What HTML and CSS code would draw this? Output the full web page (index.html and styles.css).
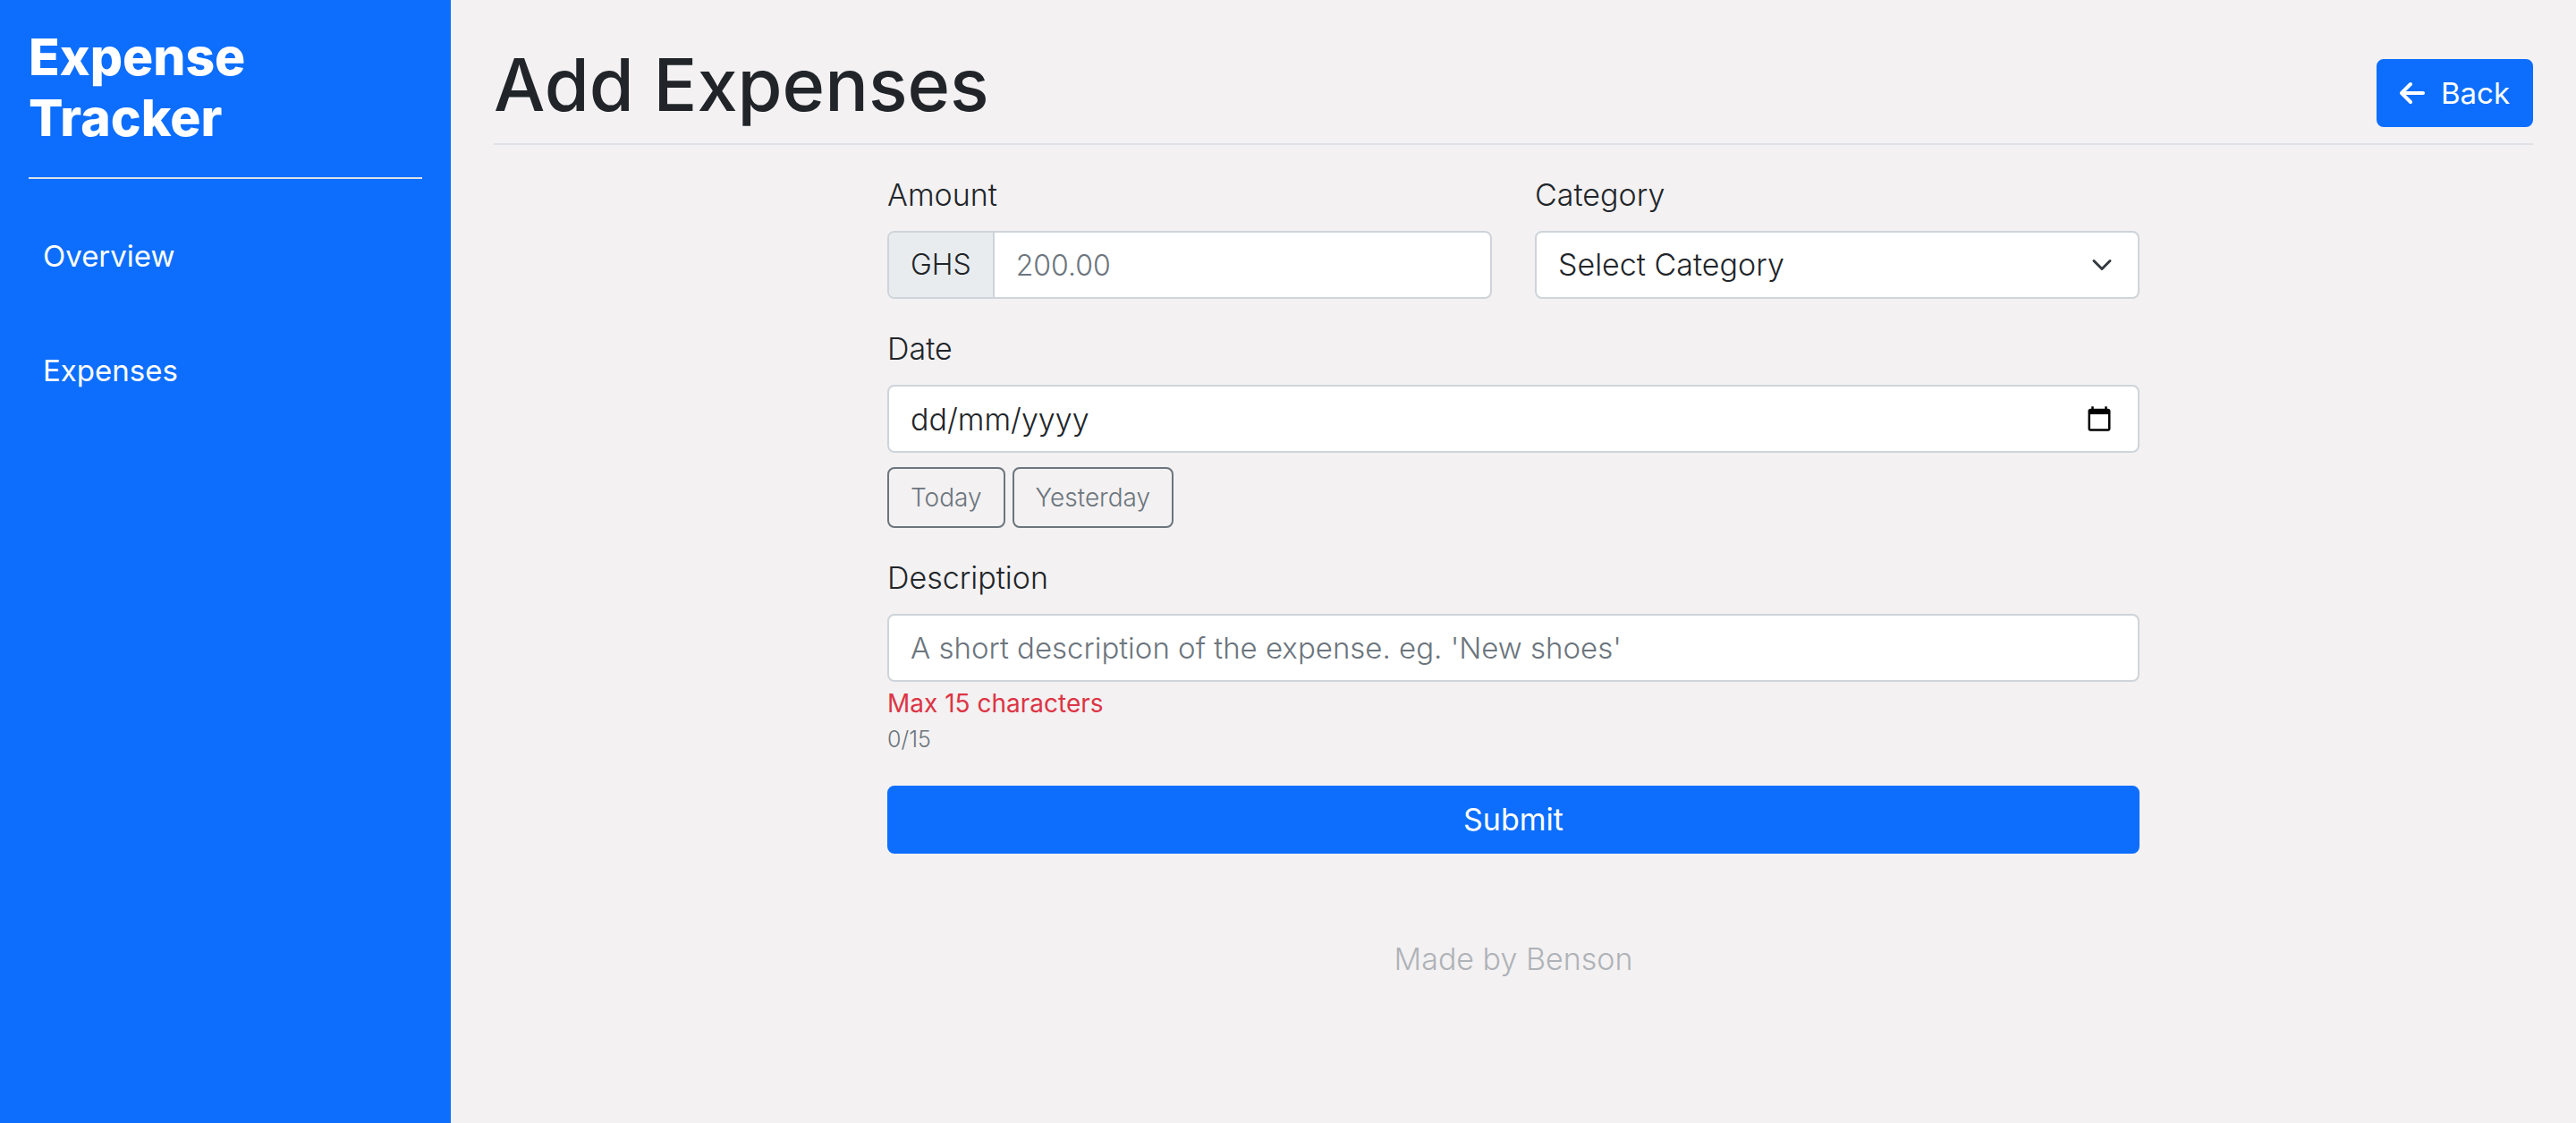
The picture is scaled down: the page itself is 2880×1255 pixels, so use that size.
FILE: index.html
```html
<!DOCTYPE html>
<html lang="en-GB">
<head>
  <meta charset="utf-8">
  <meta name="viewport" content="width=device-width, initial-scale=1">
  <title>Add Expenses | Expense Tracker</title>
  <link rel="stylesheet" href="styles.css">
</head>
<body>
  <div class="layout">
    <aside class="sidebar">
      <h2 class="brand">Expense Tracker</h2>
      <nav class="nav">
        <a class="nav-link" href="#overview">Overview</a>
        <a class="nav-link" href="#expenses">Expenses</a>
      </nav>
    </aside>

    <main class="main">
      <header class="page-header">
        <h1 class="page-title">Add Expenses</h1>
        <a class="btn btn-primary btn-back" href="#back">
          <svg class="btn-icon" viewBox="0 0 448 512" aria-hidden="true"><path fill="currentColor" d="M9.4 233.4c-12.5 12.5-12.5 32.8 0 45.3l160 160c12.5 12.5 32.8 12.5 45.3 0s12.5-32.8 0-45.3L109.2 288 416 288c17.7 0 32-14.3 32-32s-14.3-32-32-32l-306.7 0L214.6 118.6c12.5-12.5 12.5-32.8 0-45.3s-32.8-12.5-45.3 0l-160 160z"/></svg>
          Back
        </a>
      </header>

      <form class="form">
        <div class="row">
          <div class="field">
            <label class="label" for="amount">Amount</label>
            <div class="control control-amount">
              <span class="addon">GHS</span>
              <input class="input" id="amount" type="text" inputmode="decimal" placeholder="200.00">
            </div>
          </div>
          <div class="field">
            <label class="label" for="category">Category</label>
            <div class="control">
              <select class="input select" id="category">
                <option>Select Category</option>
              </select>
            </div>
          </div>
        </div>

        <div class="field">
          <label class="label" for="date">Date</label>
          <div class="control">
            <input class="input input-date" id="date" type="text" placeholder="dd/mm/yyyy">
            <button class="picker" type="button" aria-label="Show date picker">
              <svg class="picker-icon" viewBox="0 0 24 24" aria-hidden="true"><path d="M20 3h-1V1h-2v2H7V1H5v2H4c-1.100 0-2 .9-2 2v16c0 1.100.9 2 2 2h16c1.100 0 2-.9 2-2V5c0-1.100-.9-2-2-2zm0 18H4V8h16v13z"/></svg>
            </button>
          </div>
          <div class="shortcuts">
            <button class="btn btn-outline" type="button">Today</button>
            <button class="btn btn-outline" type="button">Yesterday</button>
          </div>
        </div>

        <div class="field">
          <label class="label" for="description">Description</label>
          <div class="control control-text">
            <input class="input" id="description" type="text" placeholder="A short description of the expense. eg. 'New shoes'">
          </div>
          <p class="error">Max 15 characters</p>
          <p class="counter">0/15</p>
        </div>

        <button class="btn btn-primary" type="submit">Submit</button>
      </form>

      <footer class="footer">Made by Benson</footer>
    </main>
  </div>
</body>
</html>
```
FILE: styles.css
```css
:root {
  --blue: #0d6efd;
  --ink: #212529;
  --muted: #6c757d;
  --line: #dee2e6;
  --border: #ced4da;
}

*,
*::before,
*::after {
  box-sizing: border-box;
}

body {
  margin: 0;
  background: #f3f1f2;
  color: var(--ink);
  font-family: Inter, "Noto Sans", sans-serif;
  font-size: 34px;
  font-weight: 300;
  line-height: 48px;
}

h1,
h2,
p {
  margin: 0;
}

.layout {
  display: flex;
  min-height: 100vh;
}

.sidebar {
  flex: 0 0 17.5%;
  padding: 30px 32px;
  background: var(--blue);
  color: #fff;
}

.brand {
  padding-bottom: 32px;
  border-bottom: 2px solid var(--line);
  font-size: 57px;
  font-weight: 800;
  line-height: 68px;
}

.nav {
  display: flex;
  flex-direction: column;
  gap: 32px;
  padding-top: 38px;
}

.nav-link {
  padding: 24px 16px;
  color: #fff;
  font-size: 33px;
  font-weight: 400;
  text-decoration: none;
}

.main {
  flex: 1;
  min-width: 0;
  padding: 48px;
}

.page-header {
  display: flex;
  justify-content: space-between;
  align-items: flex-end;
  margin-bottom: 32px;
  padding-bottom: 18px;
  border-bottom: 2px solid var(--line);
}

.page-title {
  font-size: 81px;
  font-weight: 500;
  line-height: 94px;
}

.btn {
  display: flex;
  align-items: center;
  justify-content: center;
  gap: 18px;
  padding: 12px 24px;
  border: 2px solid transparent;
  border-radius: 8px;
  background: none;
  font: inherit;
  text-decoration: none;
  cursor: pointer;
}

.btn-primary {
  border-color: var(--blue);
  background: var(--blue);
  color: #fff;
  font-weight: 400;
}

.btn-back {
  font-size: 33px;
}

.btn-outline {
  border-color: var(--muted);
  color: var(--muted);
  font-size: 28px;
  line-height: 40px;
}

.btn-icon {
  width: 28px;
  height: 32px;
}

.form {
  display: flex;
  flex-direction: column;
  gap: 32px;
  max-width: 1400px;
  margin: 0 auto;
}

.row {
  display: grid;
  grid-template-columns: repeat(2, minmax(0, 1fr));
  gap: 48px;
}

.label {
  display: block;
  margin-bottom: 16px;
}

.control {
  display: flex;
  border: 2px solid var(--border);
  border-radius: 8px;
  background: #fff;
  overflow: hidden;
}

.control-amount {
  font-size: 32px;
}

.control-text {
  font-size: 33px;
}

.addon {
  padding: 12px 24px;
  border-right: 2px solid var(--border);
  background: #e9ecef;
}

.input {
  flex: 1;
  min-width: 0;
  height: 72px;
  padding: 12px 24px;
  border: 0;
  background: transparent;
  color: var(--ink);
  font: inherit;
}

.input::placeholder {
  color: var(--muted);
  opacity: 1;
}

.input-date::placeholder {
  color: var(--ink);
}

.select {
  appearance: none;
  background: url("data:image/svg+xml,%3Csvg xmlns='http://www.w3.org/2000/svg' viewBox='0 0 16 16'%3E%3Cpath fill='none' stroke='%23343a40' stroke-linecap='round' stroke-linejoin='round' stroke-width='2' d='m2 5 6 6 6-6'/%3E%3C/svg%3E") no-repeat right 24px center / 32px 24px;
}

.picker {
  display: flex;
  align-items: center;
  padding: 0 28px;
  border: 0;
  background: none;
  cursor: pointer;
}

.picker-icon {
  width: 30px;
  height: 30px;
}

.shortcuts {
  display: flex;
  gap: 8px;
  margin-top: 16px;
}

.error {
  margin-top: 4px;
  color: #dc3545;
  font-size: 28px;
  font-weight: 400;
  line-height: 40px;
}

.counter {
  color: var(--muted);
  font-size: 25px;
  line-height: 40px;
}

.footer {
  margin-top: 94px;
  color: var(--muted);
  text-align: center;
  opacity: 0.5;
}
```
